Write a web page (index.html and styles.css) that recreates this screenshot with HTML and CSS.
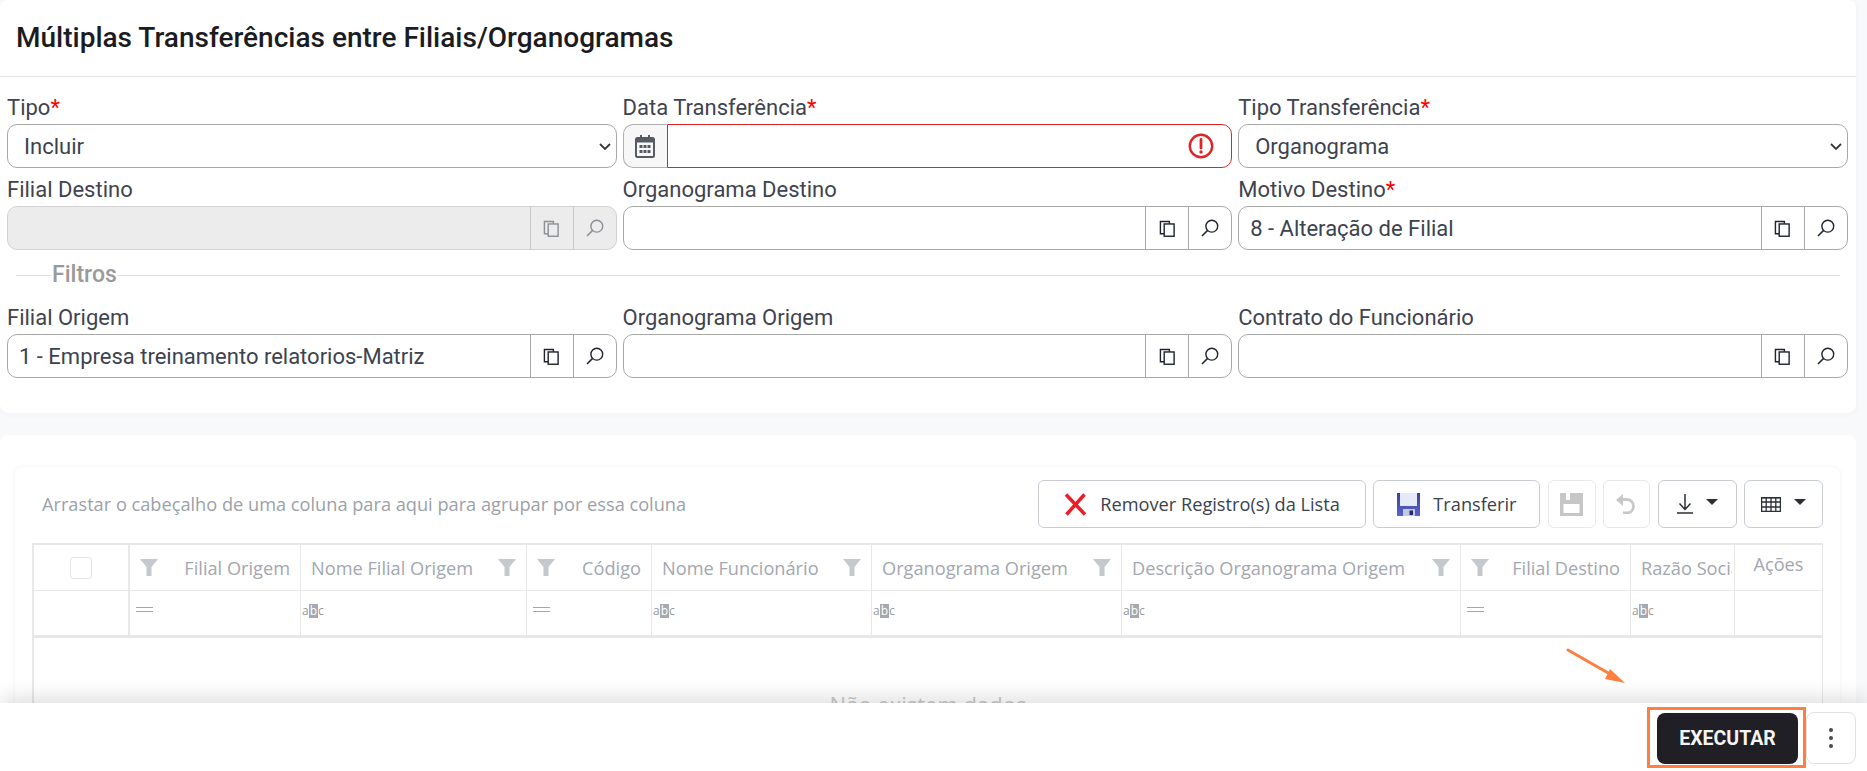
FILE: index.html
```html
<!DOCTYPE html>
<html lang="pt">
<head>
<meta charset="utf-8">
<title>Múltiplas Transferências entre Filiais/Organogramas</title>
<link rel="stylesheet" href="styles.css">
</head>
<body>
<svg class="sprite" aria-hidden="true">
  <symbol id="i-copy" viewBox="0 0 18 18"><path d="M5.500 14.500H1.500V1.500H11V4" fill="none" stroke="currentColor" stroke-width="1.500"/><rect x="5.500" y="4.200" width="10.500" height="13" fill="none" stroke="currentColor" stroke-width="1.500"/></symbol>
  <symbol id="i-search" viewBox="0 0 18 18"><circle cx="10.800" cy="7.200" r="5.900" fill="none" stroke="currentColor" stroke-width="1.400"/><path d="M6.600 11.400L1 17" fill="none" stroke="currentColor" stroke-width="1.500"/></symbol>
  <symbol id="i-funnel" viewBox="0 0 18 17"><path d="M0 0H18L11.500 8V17H6.500V8Z" fill="currentColor"/></symbol>
</svg>

<main class="page">
  <section class="card form-card">
    <header class="card-head"><h1>Múltiplas Transferências entre Filiais/Organogramas</h1></header>
    <div class="form-grid">
      <div class="field">
        <label>Tipo<span class="req">*</span></label>
        <select class="select"><option>Incluir</option></select>
      </div>
      <div class="field">
        <label>Data Transferência<span class="req">*</span></label>
        <div class="group group-date">
          <span class="addon addon-date">
            <svg width="20" height="23" viewBox="0 0 20 23"><path d="M5 0h2v3H5zM13 0h2v3h-2z" fill="#555a63"/><path d="M2.500 2h15A2.500 2.500 0 0 1 20 4.500V20.500A2.500 2.500 0 0 1 17.500 23H2.500A2.500 2.500 0 0 1 0 20.500V4.500A2.500 2.500 0 0 1 2.500 2Z" fill="#555a63"/><rect x="2" y="7.500" width="16" height="13.500" fill="#f7f7f7"/><path d="M4.500 10h3v3h-3zM8.500 10h3v3h-3zM12.500 10h3v3h-3zM4.500 15h3v3h-3zM8.500 15h3v3h-3zM12.500 15h3v3h-3z" fill="#555a63"/></svg>
          </span>
          <div class="input-error">
            <input class="input" type="text">
            <svg class="error-icon" width="26" height="26" viewBox="0 0 26 26"><circle cx="13" cy="13" r="11.200" fill="none" stroke="#dc2626" stroke-width="2.400"/><path d="M13 6.500V15" stroke="#dc2626" stroke-width="2.800" stroke-linecap="round"/><circle cx="13" cy="19" r="1.700" fill="#dc2626"/></svg>
          </div>
        </div>
      </div>
      <div class="field">
        <label>Tipo Transferência<span class="req">*</span></label>
        <select class="select"><option>Organograma</option></select>
      </div>

      <div class="field">
        <label>Filial Destino</label>
        <div class="group group-disabled">
          <input class="input" type="text" disabled>
          <button class="addon-btn" type="button"><svg class="ic-copy"><use href="#i-copy"/></svg></button>
          <button class="addon-btn" type="button"><svg class="ic-search"><use href="#i-search"/></svg></button>
        </div>
      </div>
      <div class="field">
        <label>Organograma Destino</label>
        <div class="group">
          <input class="input" type="text">
          <button class="addon-btn" type="button"><svg class="ic-copy"><use href="#i-copy"/></svg></button>
          <button class="addon-btn" type="button"><svg class="ic-search"><use href="#i-search"/></svg></button>
        </div>
      </div>
      <div class="field">
        <label>Motivo Destino<span class="req">*</span></label>
        <div class="group">
          <input class="input" type="text" value="8 - Alteração de Filial">
          <button class="addon-btn" type="button"><svg class="ic-copy"><use href="#i-copy"/></svg></button>
          <button class="addon-btn" type="button"><svg class="ic-search"><use href="#i-search"/></svg></button>
        </div>
      </div>

      <div class="legend"><span>Filtros</span></div>

      <div class="field">
        <label>Filial Origem</label>
        <div class="group">
          <input class="input" type="text" value="1 - Empresa treinamento relatorios-Matriz">
          <button class="addon-btn" type="button"><svg class="ic-copy"><use href="#i-copy"/></svg></button>
          <button class="addon-btn" type="button"><svg class="ic-search"><use href="#i-search"/></svg></button>
        </div>
      </div>
      <div class="field">
        <label>Organograma Origem</label>
        <div class="group">
          <input class="input" type="text">
          <button class="addon-btn" type="button"><svg class="ic-copy"><use href="#i-copy"/></svg></button>
          <button class="addon-btn" type="button"><svg class="ic-search"><use href="#i-search"/></svg></button>
        </div>
      </div>
      <div class="field">
        <label>Contrato do Funcionário</label>
        <div class="group">
          <input class="input" type="text">
          <button class="addon-btn" type="button"><svg class="ic-copy"><use href="#i-copy"/></svg></button>
          <button class="addon-btn" type="button"><svg class="ic-search"><use href="#i-search"/></svg></button>
        </div>
      </div>
    </div>
  </section>

  <section class="card grid-card">
    <div class="grid-panel">
      <div class="toolbar">
        <span class="group-hint">Arrastar o cabeçalho de uma coluna para aqui para agrupar por essa coluna</span>
        <div class="tools">
          <button class="tool tool-remove" type="button">
            <svg width="23" height="23" viewBox="0 0 23 23"><path d="M2 1.500L21 21.500M20.500 1.500L2.500 21.500" stroke="#ee1c25" stroke-width="3.500" fill="none"/></svg>
            <span>Remover Registro(s) da Lista</span>
          </button>
          <button class="tool tool-transfer" type="button">
            <svg width="23" height="23" viewBox="0 0 23 23"><defs><linearGradient id="fl" x1="0" y1="0" x2="0" y2="1"><stop offset="0" stop-color="#3a4299"/><stop offset="1" stop-color="#5a64cc"/></linearGradient></defs><rect width="23" height="23" fill="url(#fl)"/><rect x="3" y="0" width="17" height="13" fill="#e6e9f8"/><rect x="6" y="16" width="12" height="7" fill="#c4c8e4"/><rect x="12.500" y="17.500" width="3.500" height="4.500" fill="#23286e"/></svg>
            <span>Transferir</span>
          </button>
          <button class="tool tool-icon tool-off" type="button">
            <svg width="23" height="23" viewBox="0 0 23 23"><path d="M0 0H23V23H0Z" fill="#c6c6c6"/><rect x="6" y="0" width="4" height="7" fill="#fff"/><rect x="3.500" y="11" width="16" height="9" fill="#fff"/></svg>
          </button>
          <button class="tool tool-icon tool-undo tool-off" type="button">
            <svg width="21" height="20" viewBox="0 0 21 20"><path d="M5 5.500H11.500A6.800 6.800 0 0 1 11.500 19H7" fill="none" stroke="#c8c8c8" stroke-width="2.800"/><path d="M0 6L7 0V12Z" fill="#c8c8c8"/></svg>
          </button>
          <button class="tool tool-menu" type="button">
            <svg width="16" height="20" viewBox="0 0 16 20"><path d="M8 0V15M2.500 9.500L8 15.500L13.500 9.500M0 19H16" fill="none" stroke="#2b2f36" stroke-width="1.500"/></svg>
            <span class="caret"></span>
          </button>
          <button class="tool tool-menu" type="button">
            <svg width="20" height="15" viewBox="0 0 20 15"><path d="M.6.600H19.400V14.400H.6ZM.6 5H19.400M.6 10H19.400M5.200.600V14.400M10 .600V14.400M14.800.600V14.400" fill="none" stroke="#2b2f36" stroke-width="1.300"/><path d="M0 0H20V1.500H0Z" fill="#2b2f36"/></svg>
            <span class="caret"></span>
          </button>
        </div>
      </div>

      <div class="table">
        <div class="th th-check"><span class="checkbox"></span></div>
        <div class="th"><svg class="funnel" width="18" height="17"><use href="#i-funnel"/></svg><span>Filial Origem</span></div>
        <div class="th"><span>Nome Filial Origem</span><svg class="funnel" width="18" height="17"><use href="#i-funnel"/></svg></div>
        <div class="th"><svg class="funnel" width="18" height="17"><use href="#i-funnel"/></svg><span>Código</span></div>
        <div class="th"><span>Nome Funcionário</span><svg class="funnel" width="18" height="17"><use href="#i-funnel"/></svg></div>
        <div class="th"><span>Organograma Origem</span><svg class="funnel" width="18" height="17"><use href="#i-funnel"/></svg></div>
        <div class="th"><span>Descrição Organograma Origem</span><svg class="funnel" width="18" height="17"><use href="#i-funnel"/></svg></div>
        <div class="th"><svg class="funnel" width="18" height="17"><use href="#i-funnel"/></svg><span>Filial Destino</span></div>
        <div class="th th-clip"><span>Razão Social Destino</span></div>
        <div class="th th-actions"><span>Ações</span></div>

        <div class="tf tf-check"></div>
        <div class="tf"><span class="eq"></span></div>
        <div class="tf"><span class="abc">a<b>b</b>c</span></div>
        <div class="tf"><span class="eq"></span></div>
        <div class="tf"><span class="abc">a<b>b</b>c</span></div>
        <div class="tf"><span class="abc">a<b>b</b>c</span></div>
        <div class="tf"><span class="abc">a<b>b</b>c</span></div>
        <div class="tf"><span class="eq"></span></div>
        <div class="tf"><span class="abc">a<b>b</b>c</span></div>
        <div class="tf"></div>

        <div class="empty">Não existem dados</div>
      </div>
    </div>
  </section>
</main>

<svg class="callout-arrow" width="62" height="40" viewBox="0 0 62 40" aria-hidden="true"><path d="M2 2L44 26" stroke="#ff7f3f" stroke-width="3" stroke-linecap="round"/><path d="M59 35L39 31L44 21Z" fill="#ff7f3f"/></svg>

<footer class="footer">
  <div class="run-wrap"><button class="run" type="button">EXECUTAR</button></div>
  <button class="more" type="button"><i></i><i></i><i></i></button>
</footer>
</body>
</html>
```
FILE: styles.css
```css
* { box-sizing: border-box; }
html, body { margin: 0; height: 100%; }
body {
  position: relative;
  height: 771px;
  overflow: hidden;
  background: #f8f9fb;
  font-family: Roboto, "Liberation Sans", sans-serif;
  color: #3c4350;
}
.sprite { display: none; }
.page { padding-right: 11px; }
.card { background: #fff; border-radius: 8px; }
.form-card {
  padding-bottom: 35px;
  box-shadow: 0 1px 6px rgba(40, 50, 70, .04);
}
.card-head {
  height: 77px;
  padding: 0 16px 2px;
  display: flex;
  align-items: center;
  border-bottom: 1px solid #e4e4e4;
}
.card-head h1 {
  margin: 0;
  font-size: 28px;
  font-weight: 500;
  color: #1b1c22;
}
.form-grid {
  display: grid;
  grid-template-columns: repeat(3, 609.600px);
  column-gap: 6px;
  padding: 9px 0 0 7px;
}
.field { display: flex; flex-direction: column; min-width: 0; }
.field label {
  height: 38px;
  padding-top: 9px;
  font-size: 22px;
  line-height: 26px;
  color: #3f4450;
  white-space: nowrap;
}
.req { color: #f00; }
.select, .group {
  height: 44px;
  border: 1px solid #a8a8a8;
  border-radius: 10px;
  background: #fff;
}
.select {
  width: 100%;
  padding: 0 24px 0 16px;
  appearance: none;
  background: #fff url("data:image/svg+xml,%3Csvg xmlns='http://www.w3.org/2000/svg' width='12' height='7' viewBox='0 0 12 7'%3E%3Cpath d='M1 1l5 5 5-5' fill='none' stroke='%23343a40' stroke-width='1.800'/%3E%3C/svg%3E") no-repeat right 5px center;
  font: 22px Roboto, sans-serif;
  color: #3c4350;
}
.group { display: flex; overflow: hidden; }
.input {
  flex: 1;
  min-width: 0;
  height: 100%;
  padding: 0 11px;
  border: 0;
  outline: 0;
  background: transparent;
  font: 22px Roboto, sans-serif;
  color: #3c4350;
}
.addon-btn {
  width: 43px;
  flex: none;
  display: flex;
  align-items: center;
  justify-content: center;
  padding: 0;
  border: 0;
  border-left: 1px solid #a8a8a8;
  background: transparent;
  color: #1f2430;
}
.ic-copy { width: 17px; height: 17px; }
.ic-search { width: 18px; height: 18px; }
.group-disabled { background: #ececec; border-color: #d2d2d2; }
.group-disabled .addon-btn { color: #8b8f96; border-left-color: #c8c8c8; }
.group-date { border: 0; overflow: visible; background: transparent; }
.addon {
  flex: none;
  display: flex;
  align-items: center;
  justify-content: center;
}
.addon-date {
  width: 44px;
  background: #f7f7f7;
  border: 1px solid #b0b0b0;
  border-right: 0;
  border-radius: 10px 0 0 10px;
}
.input-error {
  position: relative;
  flex: 1;
  display: flex;
  align-items: center;
  border: 1.500px solid #dc2626;
  border-radius: 0 10px 10px 0;
}
.error-icon { position: absolute; right: 17px; top: 7.500px; }
.legend {
  grid-column: 1 / -1;
  height: 46px;
  margin-left: 9px;
  margin-right: 8px;
  padding-top: 11px;
  position: relative;
  font-size: 23px;
  line-height: 28px;
  font-weight: 500;
  color: #9a9a9a;
}
.legend::before {
  content: "";
  position: absolute;
  left: 0;
  right: 0;
  top: 25px;
  border-top: 1px solid #e2e2e2;
}
.legend span {
  position: relative;
  margin-left: 36px;
  background: #fff;
}

.grid-card {
  margin-top: 22px;
  padding: 32px 16px 0 15px;
  height: 336px;
}
.grid-panel {
  padding: 13px 17px 0 17px;
  border-radius: 8px;
  box-shadow: 0 0 4px rgba(40, 50, 70, .06);
  height: 100%;
}
.toolbar {
  display: flex;
  align-items: center;
  justify-content: space-between;
  height: 48px;
  padding-left: 10px;
  margin-bottom: 15px;
  font-family: "Open Sans", sans-serif;
}
.group-hint { font-size: 18.200px; color: #9ca1a8; white-space: nowrap; }
.tools { display: flex; gap: 7.400px; }
.tool {
  height: 48px;
  display: flex;
  align-items: center;
  justify-content: center;
  padding: 0;
  border: 1px solid #c9cdd1;
  border-radius: 6px;
  background: #fff;
  font: 18.200px "Open Sans", sans-serif;
  color: #3a4250;
}
.tool-remove { width: 328px; gap: 13px; }
.tool-transfer { width: 167px; gap: 13px; }
.tool-icon { width: 48px; }
.tool-undo { width: 47px; }
.tool-off { border-color: #e6e8ea; }
.tool-menu { width: 79px; gap: 13px; }
.caret {
  width: 0;
  height: 0;
  border-left: 6px solid transparent;
  border-right: 6px solid transparent;
  border-top: 6px solid #2b2f36;
  margin-bottom: 4px;
}
.table {
  display: grid;
  grid-template-columns: 96px 171px 226px 125px 220px 250px 339px 170px 104px 87px;
  grid-template-rows: 46px 47px 133px;
  border: solid #e8e8e8;
  border-width: 2px 1px 0 2px;
  font-family: "Open Sans", sans-serif;
}
.th, .tf {
  border-right: 1px solid #e8e8e8;
  border-bottom: 1px solid #e8e8e8;
  min-width: 0;
}
.th {
  display: flex;
  align-items: center;
  justify-content: space-between;
  padding: 0 10px;
  font-size: 18.200px;
  color: #a2a7b0;
  white-space: nowrap;
  overflow: hidden;
}
.th-check, .tf-check { border-right-width: 2px; }
.th-check { justify-content: center; }
.checkbox {
  width: 22px;
  height: 22px;
  border: 1px solid #e6e6e6;
  border-radius: 3px;
}
.th-clip { justify-content: flex-start; padding-right: 2px; }
.th-clip span { overflow: hidden; }
.th-actions { justify-content: center; padding-bottom: 8px; border-right: 0; }
.funnel { color: #c5c8cc; flex: none; }
.tf {
  display: flex;
  align-items: center;
  padding-bottom: 4px;
  border-bottom-width: 3px;
}
.tf:nth-last-child(2) { border-right: 0; }
.eq {
  display: block;
  width: 17px;
  height: 5px;
  margin: 0 0 4px 6px;
  border-top: 1px solid #a6a6a6;
  border-bottom: 1px solid #a6a6a6;
}
.abc {
  font: 12px/14px "Open Sans", sans-serif;
  color: #999;
  padding-left: 1px;
}
.abc b { display: inline-block; font-weight: 400; background: #a4aab0; color: #fff; padding: 0 1px; }
.empty {
  grid-column: 1 / -1;
  padding-top: 51px;
  text-align: center;
  font-size: 22px;
  line-height: 30px;
  color: #c9c9c9;
}

.callout-arrow { position: absolute; left: 1566px; top: 648px; }
.footer {
  position: absolute;
  left: 0;
  right: 0;
  bottom: 0;
  height: 68px;
  padding: 10px 11px 0 0;
  display: flex;
  justify-content: flex-end;
  align-items: flex-start;
  gap: 8px;
  background: #fff;
  box-shadow: 0 -6px 18px rgba(0, 0, 0, .12);
}
.run-wrap { position: relative; }
.run-wrap::after {
  content: "";
  position: absolute;
  left: -10px;
  right: -8px;
  top: -6px;
  bottom: -4px;
  border: 3px solid #ff7f3f;
  pointer-events: none;
}
.run {
  display: block;
  width: 141px;
  height: 51px;
  border: 0;
  border-radius: 8px;
  background: #1f1f25;
  color: #f4f4f4;
  font: 700 19.500px Roboto, sans-serif;
}
.more {
  width: 50px;
  height: 52px;
  margin-top: -1px;
  display: flex;
  flex-direction: column;
  align-items: center;
  justify-content: center;
  gap: 4px;
  border: 1px solid #e2e2e2;
  border-radius: 8px;
  background: #fff;
}
.more i { width: 4px; height: 4px; border-radius: 50%; background: #4a4a4a; }
```
